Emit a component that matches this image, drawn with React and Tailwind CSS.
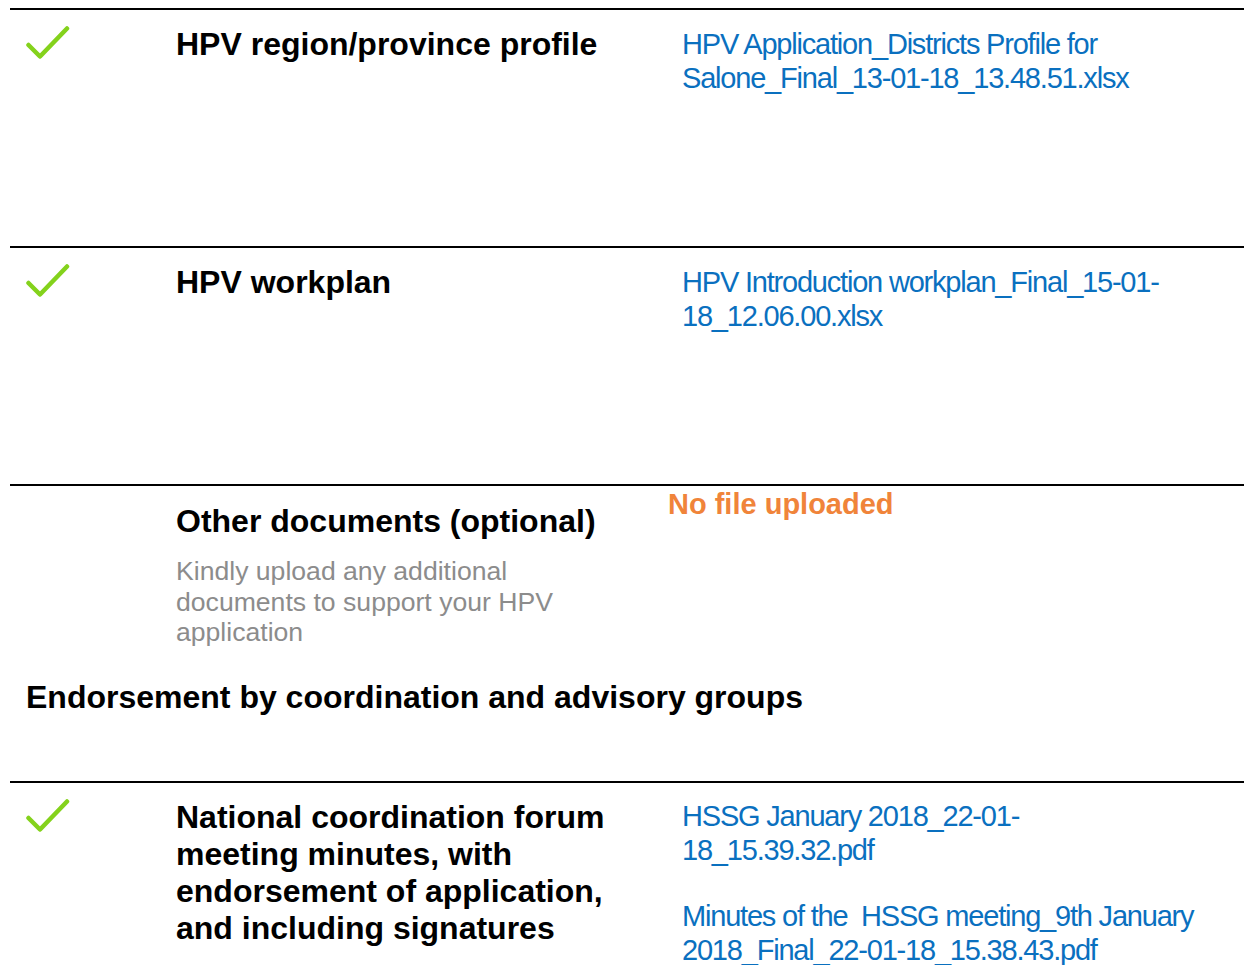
import React from "react";

const font = { fontFamily: '"Liberation Sans", Arial, sans-serif' };

function Check() {
  return (
    <svg width="44" height="34" viewBox="0 0 44 34" className="blur-[0.6px]">
      <polyline
        points="2.5,19 14,30.5 41,2.5"
        fill="none"
        stroke="#84d21c"
        strokeWidth="4.5"
        strokeLinecap="round"
        strokeLinejoin="round"
      />
    </svg>
  );
}

function FileLink({ children, className = "" }) {
  return (
    <a
      href="#"
      className={
        "block text-[29px] leading-[34px] tracking-[-1.2px] text-[#0a70bf] " +
        className
      }
    >
      {children}
    </a>
  );
}

/*
 * @props: done (bool) - 업로드 완료 여부
 *         title (string)
 *         files - 파일 목록 영역
 */
function DocRow({ done, title, note, files, titleTop = "pt-[16px]", height = "h-[238px]" }) {
  return (
    <div
      className={"grid grid-cols-[166px_492px_1fr] border-t-2 border-black " + height}
    >
      <div className="pl-[16px] pt-[16px]">{done && <Check />}</div>
      <div className={"pr-[12px] " + titleTop}>
        <h3 className="text-[32px] leading-[37px] font-bold text-black">{title}</h3>
        {note && (
          <p className="mt-[16px] w-[440px] text-[26.6px] leading-[30.5px] text-[#8c8c8c]">
            {note}
          </p>
        )}
      </div>
      <div className="pr-[20px]">{files}</div>
    </div>
  );
}

export default function App() {
  return (
    <div className="min-h-screen bg-white pl-[10px] pt-[8px]" style={font}>
      <DocRow
        done
        title="HPV region/province profile"
        files={
          <FileLink className="pt-[17px] pl-[14px] w-[535px]">
            HPV Application_Districts Profile for Salone_Final_13-01-18_13.48.51.xlsx
          </FileLink>
        }
      />
      <DocRow
        done
        title="HPV workplan"
        files={
          <FileLink className="pt-[17px] pl-[14px] w-[535px]">
            HPV Introduction workplan_Final_15-01-18_12.06.00.xlsx
          </FileLink>
        }
      />
      <DocRow
        title="Other documents (optional)"
        note="Kindly upload any additional documents to support your HPV application"
        titleTop="pt-[17px]"
        height="h-auto"
        files={
          <p className="pt-[1px] text-[29px] leading-[34px] font-bold text-[#f0843a]">
            No file uploaded
          </p>
        }
      />

      <h2 className="mt-[31px] mb-[65px] pl-[16px] text-[32px] leading-[37px] font-bold text-black">
        Endorsement by coordination and advisory groups
      </h2>

      <DocRow
        done
        title="National coordination forum meeting minutes, with endorsement of application, and including signatures"
        height="h-auto"
        files={
          <div className="pt-[16px] pl-[14px] w-[535px]">
            <FileLink>HSSG January 2018_22-01-18_15.39.32.pdf</FileLink>
            <FileLink className="mt-[32px]">
              Minutes of the&nbsp; HSSG meeting_9th January 2018_Final_22-01-18_15.38.43.pdf
            </FileLink>
          </div>
        }
      />
    </div>
  );
}
